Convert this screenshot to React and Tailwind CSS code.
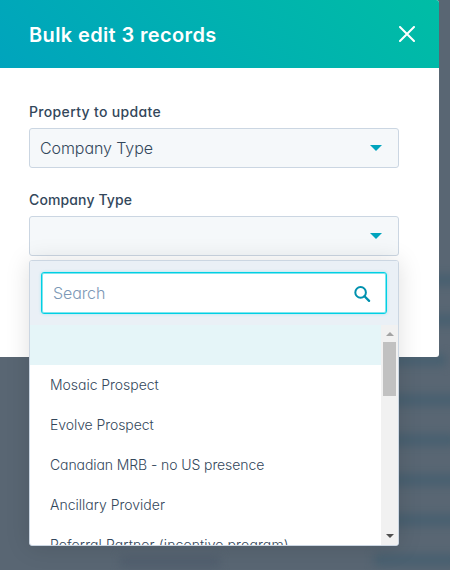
import React from "react";

const options = [
  { name: "Mosaic Prospect", tracking: "tracking-[-0.04px]" },
  { name: "Evolve Prospect", tracking: "tracking-[-0.07px]" },
  { name: "Canadian MRB - no US presence", tracking: "tracking-[-0.09px]" },
  { name: "Ancillary Provider", tracking: "tracking-normal" },
  { name: "Referral Partner (incentive program)", tracking: "tracking-[0.11px]" },
];

const backdropRows = [
  { id: 1, line: "ml-[430px] w-9" },
  { id: 2, line: "ml-[430px] w-9" },
  { id: 3, line: "ml-[390px] w-[56px]" },
  { id: 4, line: "ml-[390px] w-[76px]" },
  { id: 5, line: "ml-[390px] w-[66px]" },
  { id: 6, line: "ml-[390px] w-[76px]" },
  { id: 7, line: "ml-[390px] w-[76px]" },
  { id: 8, line: "ml-[374px] w-[84px]" },
];

function Caret() {
  return (
    <svg width="12" height="6" viewBox="0 0 12 6" fill="#00a4bd">
      <path d="M0 0h12L6 6z" />
    </svg>
  );
}

function SelectField({ label, labelTracking, value, children }) {
  return (
    <div className="relative">
      <p
        className={`h-6 mb-1 text-[14px] leading-6 font-medium text-[#33475b] whitespace-nowrap ${labelTracking}`}
      >
        {label}
      </p>
      <button className="flex items-center justify-between w-full h-10 pl-[10px] pr-4 rounded-[3px] border border-[#cbd6e2] bg-[#f5f8fa] text-[16px] font-light text-[#33475b]">
        <span className="tracking-[-0.08px]">{value}</span>
        <Caret />
      </button>
      {children}
    </div>
  );
}

function Dropdown() {
  return (
    <div className="absolute top-full left-0 mt-1 w-full h-[286px] flex flex-col overflow-hidden rounded-[3px] border border-[#cbd6e2] bg-white shadow-[0_1px_24px_0_rgba(0,0,0,0.13)]">
      {/* Search */}
      <div className="h-16 shrink-0 pt-[11px] px-[11px] bg-[#eaf0f6]">
        <div className="flex items-center justify-between h-[42px] pl-[11px] pr-[15px] rounded-[3px] border border-[#00d0e4] bg-white shadow-[inset_0_0_0_1px_#7fe5ee,0_0_3px_rgba(0,208,228,0.3)]">
          <span className="text-[16px] font-light text-[#7c98b6] tracking-[-0.1px]">
            Search
          </span>
          <svg className="mt-[2px]" width="18" height="18" viewBox="0 0 18 18" fill="none" stroke="#0091ae">
            <circle cx="7.6" cy="7.4" r="5.3" strokeWidth="2" />
            <path d="M11.5 11.3l4.6 4.6" strokeWidth="2.3" strokeLinecap="round" />
          </svg>
        </div>
      </div>

      {/* Options */}
      <div className="flex flex-1 min-h-0">
        <ul className="flex-1 overflow-hidden text-[14px] font-light text-[#33475b]">
          <li className="h-10 bg-[#e5f5f8]" />
          {options.map(({ name, tracking }) => (
            <li key={name} className={`h-10 pl-5 leading-10 whitespace-nowrap ${tracking}`}>
              {name}
            </li>
          ))}
        </ul>
        <div className="flex flex-col items-center w-[17px] pt-[7px] pb-[7px] bg-[#f1f1f1]">
          <svg width="8" height="4" viewBox="0 0 8 4" fill="#a3a3a3">
            <path d="M0 4h8L4 0z" />
          </svg>
          <div className="w-[13px] h-[54px] mt-[6px] bg-[#c1c1c1]" />
          <svg className="mt-auto" width="8" height="4" viewBox="0 0 8 4" fill="#505050">
            <path d="M0 0h8L4 4z" />
          </svg>
        </div>
      </div>
    </div>
  );
}

export default function App() {
  return (
    <div className="relative w-[450px] h-[570px] overflow-hidden bg-[#596673] font-['Inter',sans-serif] [font-feature-settings:'cv11','ss03']">
      {/* Dimmed table behind the panel */}
      <div className="absolute inset-0 pt-[274px] flex flex-col gap-[28px]">
        {backdropRows.map(({ id, line }) => (
          <div key={id} className={`h-3 shrink-0 bg-[#486070] blur-[4px] ${line}`} />
        ))}
      </div>
      <div className="absolute top-[556px] left-[120px] w-[100px] h-3 bg-[#515f6e] blur-[4px]" />

      {/* Panel */}
      <div className="relative w-[439px] h-[357px] rounded-r-[3px] bg-white">
        <header className="flex items-center justify-between h-[68px] pl-[29px] pr-6 rounded-tr-[3px] bg-[linear-gradient(45deg,#00a4bd,#00bda5)]">
          <h1 className="text-[20px] leading-6 font-semibold tracking-[0.37px] text-white whitespace-nowrap mt-[2px]">
            Bulk edit 3 records
          </h1>
          <svg width="16" height="16" viewBox="0 0 16 16" stroke="#fff" strokeWidth="2" strokeLinecap="round">
            <path d="M1 1l14 14M15 1L1 15" />
          </svg>
        </header>
        <div className="flex flex-col gap-5 pt-8 pl-[29px] pr-10">
          <SelectField
            label="Property to update"
            labelTracking="tracking-[0.34px]"
            value="Company Type"
          />
          <SelectField label="Company Type" labelTracking="tracking-[0.12px]" value="">
            <Dropdown />
          </SelectField>
        </div>
      </div>
    </div>
  );
}
